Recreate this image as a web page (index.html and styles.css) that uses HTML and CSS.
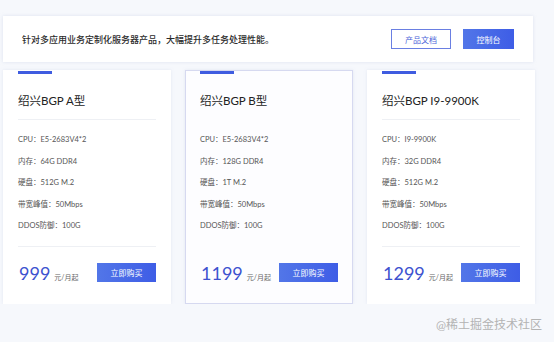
FILE: index.html
```html
<!DOCTYPE html>
<html lang="zh-CN">
<head>
    <meta charset="UTF-8">
    <meta name="viewport" content="width=device-width, initial-scale=1.0">
    <title>绍兴BGP服务器</title>
    <link rel="stylesheet" href="styles.css">
</head>
<body>
    <div class="page">
        <!-- 顶部说明条 -->
        <div class="intro">
            <p class="intro-text">针对多应用业务定制化服务器产品，大幅提升多任务处理性能。</p>
            <div class="intro-actions">
                <a class="btn-outline" href="#">产品文档</a>
                <a class="btn-primary" href="#">控制台</a>
            </div>
        </div>

        <!-- 产品卡片 -->
        <div class="cards">
            <div class="card">
                <div class="card-bar"></div>
                <h3 class="card-title">绍兴BGP A型</h3>
                <ul class="specs">
                    <li>CPU：E5-2683V4*2</li>
                    <li>内存：64G DDR4</li>
                    <li>硬盘：512G M.2</li>
                    <li>带宽峰值：50Mbps</li>
                    <li>DDOS防御：100G</li>
                </ul>
                <div class="card-foot">
                    <div class="price"><span class="price-num">999</span><span class="price-unit">元/月起</span></div>
                    <a class="buy-btn" href="#">立即购买</a>
                </div>
            </div>

            <div class="card active">
                <div class="card-bar"></div>
                <h3 class="card-title">绍兴BGP B型</h3>
                <ul class="specs">
                    <li>CPU：E5-2683V4*2</li>
                    <li>内存：128G DDR4</li>
                    <li>硬盘：1T M.2</li>
                    <li>带宽峰值：50Mbps</li>
                    <li>DDOS防御：100G</li>
                </ul>
                <div class="card-foot">
                    <div class="price"><span class="price-num">1199</span><span class="price-unit">元/月起</span></div>
                    <a class="buy-btn" href="#">立即购买</a>
                </div>
            </div>

            <div class="card">
                <div class="card-bar"></div>
                <h3 class="card-title">绍兴BGP I9-9900K</h3>
                <ul class="specs">
                    <li>CPU：I9-9900K</li>
                    <li>内存：32G DDR4</li>
                    <li>硬盘：512G M.2</li>
                    <li>带宽峰值：50Mbps</li>
                    <li>DDOS防御：100G</li>
                </ul>
                <div class="card-foot">
                    <div class="price"><span class="price-num">1299</span><span class="price-unit">元/月起</span></div>
                    <a class="buy-btn" href="#">立即购买</a>
                </div>
            </div>
        </div>
    </div>
    <div class="watermark">@稀土掘金技术社区</div>
</body>
</html>
```

FILE: styles.css
```css
body {
    font-family: Lato, "Noto Sans CJK SC", sans-serif;
    background-color: #f6f8fc;
    margin: 0;
    padding: 0;
    color: #333;
}
.page {
    width: 532px;
    padding: 16px 0 0 3px;
}
.intro {
    height: 46px;
    box-sizing: border-box;
    width: 530px;
    background-color: #fff;
    box-shadow: 0 0 3px rgba(200, 208, 230, 0.5);
    display: flex;
    justify-content: space-between;
    align-items: center;
    padding: 0 19px;
}
.intro-text {
    margin: 0;
    font-size: 9px;
    font-weight: 500;
    color: #2b2b2b;
}
.intro-actions {
    display: flex;
    gap: 12px;
}
.intro-actions a {
    display: flex;
    align-items: center;
    justify-content: center;
    height: 20px;
    box-sizing: border-box;
    font-size: 8px;
    text-decoration: none;
}
.btn-outline {
    width: 60px;
    border: 1px solid #6a7fe2;
    color: #4b63d8;
    background-color: #fff;
}
.btn-primary {
    width: 51px;
    color: #fff;
    background-image: linear-gradient(to right, #5276e8, #3e5de6);
}
.cards {
    display: flex;
    gap: 14px;
    margin-top: 8px;
}
.card {
    width: 168px;
    box-sizing: border-box;
    background-color: #fff;
    border: 1px solid #fff;
    box-shadow: 0 0 3px rgba(200, 208, 230, 0.4);
    padding: 0 14px 19px 14px;
}
.card.active {
    border-color: #d6d9f0;
    background-color: #fdfdff;
}
.card-bar {
    width: 34px;
    height: 3px;
    background-color: #3f5ce0;
}
.card-title {
    margin: 17px 0 0 0;
    line-height: 20px;
    font-size: 11.5px;
    font-weight: 400;
    color: #222;
}
.specs {
    list-style: none;
    margin: 8px 0 0 0;
    padding: 9px 0 9px 0;
    border-top: 1px solid #eef0f4;
    border-bottom: 1px solid #eef0f4;
}
.card.active .specs {
    border-color: transparent;
}
.specs li {
    line-height: 21.5px;
    font-size: 7.5px;
    color: #555;
}
.card-foot {
    display: flex;
    justify-content: space-between;
    align-items: center;
    margin-top: 15px;
}
.price {
    display: flex;
    align-items: baseline;
}
.price-num {
    font-size: 18px;
    color: #3d52cf;
    padding-left: 1px;
}
.price-unit {
    font-size: 7px;
    color: #666;
    margin-left: 4px;
}
.buy-btn {
    width: 59px;
    height: 19px;
    display: flex;
    align-items: center;
    justify-content: center;
    font-size: 8px;
    color: #fff;
    text-decoration: none;
    background-image: linear-gradient(to right, #5276e8, #3e5de6);
}
.watermark {
    position: absolute;
    right: 12px;
    bottom: 10px;
    font-size: 12px;
    color: #b3b3b3;
}
```
